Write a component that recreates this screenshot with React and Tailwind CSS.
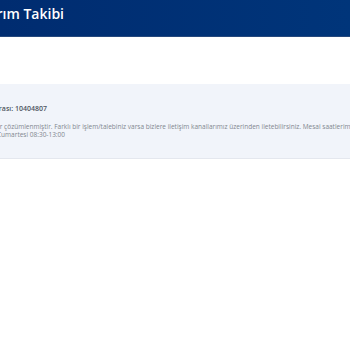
export default function App() {
  const font = { fontFamily: "'Open Sans', 'Liberation Sans', sans-serif" };
  return (
    <div className="w-[350px] h-[350px] overflow-hidden bg-white" style={font}>
      <header className="h-[37px] bg-gradient-to-r from-[#002c70] to-[#00357a] border-b border-[#25487c]">
        <div className="ml-[-71px] pt-[4px] whitespace-nowrap">
          <h1 className="text-[14px] leading-[20px] font-semibold text-white">Başvurularım Takibi</h1>
        </div>
      </header>
      <section className="mt-[47px] h-[75px] bg-[#f1f4fa] border-b border-[#e4e7ee]">
        <div className="w-[900px] pt-[20px]">
          <div className="ml-[-42px] text-[7px] leading-[10px] font-semibold text-[#4f5561]">Talep Numarası: 10404807</div>
          <p className="ml-[-36px] mt-[9px] text-[6.5px] leading-[8px] text-[#82878f]">
            Tüm talepler çözümlenmiştir. Farklı bir işlem/talebiniz varsa bizlere iletişim kanallarımız üzerinden iletebilirsiniz. Mesai saatlerimiz:
            <br />
            Pazartesi - Cumartesi 08:30-13:00
          </p>
        </div>
      </section>
    </div>
  );
}
